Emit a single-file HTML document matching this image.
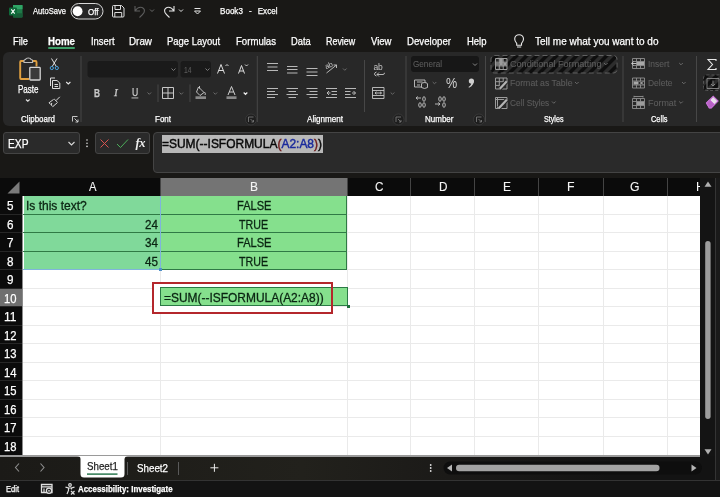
<!DOCTYPE html>
<html lang="en">
<head>
<meta charset="utf-8">
<title>Book3 - Excel</title>
<style>
*{box-sizing:border-box;margin:0;padding:0}
html,body{width:720px;height:497px;overflow:hidden;background:#191816}
body{position:relative;font-family:"Liberation Sans",sans-serif;color:#fff;font-size:11px}
.a{position:absolute;white-space:nowrap;line-height:1}
.t{transform-origin:0 50%;-webkit-text-stroke-width:0.25px}
svg{position:absolute;overflow:visible}
/* title */
#title{left:0;top:0;width:720px;height:27px;background:#191816}
#tabs{left:0;top:27px;width:720px;height:25px;background:#191816}
.tab{font-size:11.5px;color:#fff;top:36px}
/* ribbon */
#ribbon{left:3px;top:52px;width:730px;height:74px;background:#282828;border-radius:6px}
.sep{width:1px;background:#4a4a4a;top:58px;height:56px}
.glabel{font-size:9.5px;color:#fff;top:112px}
.dim{color:#6e6e6e}
/* formula bar */
#fbar{left:0;top:126px;width:720px;height:52px;background:#191816}
#namebox{left:3px;top:132px;width:77px;height:22px;background:#2a2a2a;border-radius:3px;border:1px solid #444}
#fxbox{left:95px;top:132px;width:54.5px;height:22px;background:#2a2a2a;border-radius:3px;border:1px solid #444}
#finput{left:153px;top:132px;width:574px;height:41px;background:#2a2a2a;border-radius:4px;border:1px solid #444}
/* grid */
#grid{left:0;top:178px;width:700px;height:278px;background:#fff}
#colhdr{left:0;top:177.5px;width:700px;height:18.5px;background:#0b0b0b}
#rowhdr{left:0;top:195.5px;width:22.5px;height:260.5px;background:#0b0b0b}
.ch{top:181px;font-size:13px;color:#fff;text-align:center}
.rh{left:0;width:23px;font-size:13px;color:#fff;text-align:center}
.vl{top:196px;width:1px;height:260px;background:#eaeaea}
.hl{left:23px;height:1px;width:677px;background:#eaeaea}
.cell{font-size:13px;color:#0c2a10}
.g{background:#85e08d}
/* bottom */
#sheetbar{left:0;top:456px;width:720px;height:24px;background:linear-gradient(90deg,#1b1a17 0%,#22211c 42%,#1b1a18 62%,#131313 85%)}
#status{left:0;top:480px;width:720px;height:17px;background:#131313}
#vscroll{left:700px;top:177.5px;width:20px;height:279px;background:#141414}
.chd{top:178px;width:1px;height:17.5px;background:#444}
</style>
</head>
<body>
<div class="a" id="title"></div>
<div class="a" id="tabs"></div>
<div class="a" id="ribbon"></div>
<div class="a" id="fbar"></div>
<div class="a" id="grid"></div>
<div class="a" id="colhdr"></div>
<div class="a" id="rowhdr"></div>
<div class="a" id="vscroll"></div>
<div class="a" id="sheetbar"></div>
<div class="a" id="status"></div>
<div class="a g" style="left:23.5px;top:195.6px;width:323.5px;height:74.1px"></div>
<div class="a" style="left:23.5px;top:195.6px;width:136.5px;height:74.1px;background:#80d99a"></div>
<div class="a hl" style="top:213.6px"></div>
<div class="a hl" style="top:232.1px"></div>
<div class="a hl" style="top:250.7px"></div>
<div class="a hl" style="top:269.2px"></div>
<div class="a hl" style="top:287.7px"></div>
<div class="a hl" style="top:306.2px"></div>
<div class="a hl" style="top:324.7px"></div>
<div class="a hl" style="top:343.3px"></div>
<div class="a hl" style="top:361.8px"></div>
<div class="a hl" style="top:380.3px"></div>
<div class="a hl" style="top:398.8px"></div>
<div class="a hl" style="top:417.3px"></div>
<div class="a hl" style="top:435.9px"></div>
<div class="a vl" style="left:159.5px"></div>
<div class="a vl" style="left:346.5px"></div>
<div class="a vl" style="left:410.0px"></div>
<div class="a vl" style="left:474.0px"></div>
<div class="a vl" style="left:538.0px"></div>
<div class="a vl" style="left:602.5px"></div>
<div class="a vl" style="left:666.5px"></div>
<div class="a" style="left:23px;top:213.6px;width:323.5px;height:1px;background:#2f7a45"></div>
<div class="a" style="left:23px;top:232.1px;width:323.5px;height:1px;background:#2f7a45"></div>
<div class="a" style="left:23px;top:250.7px;width:323.5px;height:1px;background:#2f7a45"></div>
<div class="a" style="left:23px;top:269.2px;width:323.5px;height:1px;background:#2f7a45"></div>
<div class="a" style="left:346px;top:195.6px;width:1px;height:74.1px;background:#2f7a45"></div>
<div class="a" style="left:159.7px;top:195.6px;width:1.5px;height:74.1px;background:#7fb4dc"></div>
<div class="a" style="left:23px;top:268.7px;width:137px;height:1.5px;background:#7fb4dc"></div>
<div class="a" style="left:159px;top:267.9px;width:3px;height:3px;background:#4f8fc8"></div>
<div class="a" style="left:152.3px;top:282.2px;width:181.2px;height:31.4px;background:#fff"></div>
<div class="a" style="left:160px;top:287.4px;width:188px;height:19.0px;background:#85e08d;border:1.5px solid #2a7a45"></div>
<div class="a" style="left:346.5px;top:304.7px;width:3.5px;height:3.5px;background:#1e6e3c"></div>
<div class="a" style="left:0;top:288.2px;width:22.5px;height:18.5px;background:#6f6f6f"></div>
<div class="a" style="left:0;top:213.6px;width:22.5px;height:1px;background:#262626"></div>
<div class="a" style="left:0;top:232.1px;width:22.5px;height:1px;background:#262626"></div>
<div class="a" style="left:0;top:250.7px;width:22.5px;height:1px;background:#262626"></div>
<div class="a" style="left:0;top:269.2px;width:22.5px;height:1px;background:#262626"></div>
<div class="a" style="left:0;top:287.7px;width:22.5px;height:1px;background:#262626"></div>
<div class="a" style="left:0;top:306.2px;width:22.5px;height:1px;background:#262626"></div>
<div class="a" style="left:0;top:324.7px;width:22.5px;height:1px;background:#262626"></div>
<div class="a" style="left:0;top:343.3px;width:22.5px;height:1px;background:#262626"></div>
<div class="a" style="left:0;top:361.8px;width:22.5px;height:1px;background:#262626"></div>
<div class="a" style="left:0;top:380.3px;width:22.5px;height:1px;background:#262626"></div>
<div class="a" style="left:0;top:398.8px;width:22.5px;height:1px;background:#262626"></div>
<div class="a" style="left:0;top:417.3px;width:22.5px;height:1px;background:#262626"></div>
<div class="a" style="left:0;top:435.9px;width:22.5px;height:1px;background:#262626"></div>
<div class="a" style="left:152.3px;top:282.2px;width:181.2px;height:31.4px;border:2.6px solid #b4272c"></div>
<!-- column header details -->
<div class="a" style="left:160px;top:177.5px;width:186.7px;height:18px;background:#747474"></div>
<div class="a" style="left:22.3px;top:195.5px;width:1.2px;height:260px;background:#8c8c8c"></div>
<div class="a chd" style="left:159.5px"></div><div class="a chd" style="left:346.5px"></div><div class="a chd" style="left:410px"></div><div class="a chd" style="left:474px"></div><div class="a chd" style="left:538px"></div><div class="a chd" style="left:602.5px"></div><div class="a chd" style="left:666.5px"></div>
<svg style="left:0;top:178px" width="23" height="18"><path d="M19.5 3.5V15.5H7.5Z" fill="#7a7a7a"/></svg>
<div class="a" style="left:696px;top:180.5px;font-size:12.5px;color:#fff;width:4px;overflow:hidden;will-change:transform">H</div>
<div class="a" style="left:0;top:455px;width:700px;height:1.5px;background:#9a9a9a"></div>
<!-- vertical scrollbar -->
<svg style="left:700px;top:178px" width="20" height="278"><path d="M4.500 8.800L8 3.600L11.500 8.800Z" fill="#b0b0b0"/><path d="M4.500 271.200L8 276.400L11.500 271.200Z" fill="#b0b0b0"/><rect x="5.200" y="63" width="5.400" height="178" rx="2.700" fill="#9d9d9d"/><rect x="15.200" y="0" width="0.800" height="302" fill="#3c3c3c"/><rect x="16" y="0" width="4" height="302" fill="#1a1a1a"/></svg>
<!-- sheet bar -->
<svg style="left:0;top:456px" width="720" height="24">
<path d="M19 7.5L15.5 11.5L19 15.5" fill="none" stroke="#8f8f8f" stroke-width="1.1"/>
<path d="M40.5 7.5L44 11.5L40.5 15.5" fill="none" stroke="#8f8f8f" stroke-width="1.1"/>
<path d="M77 0H128V0Q125 0 124.500 3V18Q124.500 21.500 121 21.500H84Q80.500 21.500 80.500 18V3Q80.500 0 77 0Z" fill="#fff"/>
<rect x="87" y="17.400" width="30.500" height="1.400" fill="#1f7044"/>
<rect x="127" y="6" width="1" height="13" fill="#5a5a5a"/>
<rect x="178" y="6" width="1" height="13" fill="#5a5a5a"/>
<path d="M210.400 11.800H218.400M214.400 7.800V15.800" stroke="#ececec" stroke-width="1" fill="none"/>
<circle cx="430.700" cy="9" r="0.900" fill="#ddd"/><circle cx="430.700" cy="12" r="0.900" fill="#ddd"/><circle cx="430.700" cy="15" r="0.900" fill="#ddd"/>
<rect x="443.500" y="5.500" width="258.500" height="13" rx="6.500" fill="#0e0e0e"/>
<rect x="456" y="8.800" width="203.500" height="6.400" rx="3.200" fill="#a3a3a3"/>
<path d="M452 8.500L447 12L452 15.500Z" fill="#b5b5b5"/>
<path d="M691.500 8.500L696.500 12L691.500 15.500Z" fill="#b5b5b5"/>
</svg>
<div class="a" style="left:0;top:480px;width:720px;height:1px;background:#333"></div>
<svg style="left:0;top:480px" width="720" height="17" viewBox="0 480 720 17">
<path d="M41.500 484.500H52V492.500H41.500ZM41.500 486.800H52" fill="none" stroke="#e0e0e0" stroke-width="1.300"/>
<circle cx="49" cy="490.800" r="2.600" fill="#1a1a1a" stroke="#e0e0e0" stroke-width="1.300"/>
<circle cx="49" cy="490.800" r="0.900" fill="#e0e0e0"/>
<path d="M44 488.500V492.500" stroke="#e0e0e0" stroke-width="1.200" fill="none"/>
<circle cx="70" cy="485" r="1.300" fill="none" stroke="#e0e0e0" stroke-width="1.200"/>
<path d="M65.500 487.200L68.500 488V490.500L67 494M74.500 487.200L71.500 488V489.500M68.500 488H71.500M71 491L74.500 494.500M74.500 491L71 494.500" fill="none" stroke="#e0e0e0" stroke-width="1.200"/>
</svg>

<!-- formula bar -->
<div class="a" id="namebox"></div>
<div class="a" id="fxbox"></div>
<div class="a" id="finput"></div>
<div class="a" style="left:162px;top:134.5px;width:160.5px;height:18px;background:#b8b8b8"></div>
<svg style="left:0;top:0" width="720" height="180" viewBox="0 0 720 180">
<!-- title bar icons -->
<g id="xl">
<rect x="13" y="5" width="9.500" height="12.500" rx="1.200" fill="#1e7a48"/>
<rect x="13" y="5" width="9.500" height="4.200" fill="#2fa565"/>
<rect x="13" y="13.300" width="9.500" height="4.200" fill="#175c37"/>
<rect x="9" y="7.500" width="8" height="8" rx="1" fill="#0f6a3a"/>
<path d="M11.300 9.300L14.700 13.700M14.700 9.300L11.300 13.700" stroke="#fff" stroke-width="1.100" fill="none"/>
</g>
<rect x="71" y="3.500" width="32" height="15.500" rx="7.750" fill="#262626" stroke="#d8d8d8" stroke-width="1"/>
<circle cx="77.600" cy="11.250" r="4.900" fill="#fff"/>
<!-- save -->
<path d="M112.500 6.500Q112.500 5.500 113.500 5.500H121.500L124 8V16Q124 17 123 17H113.500Q112.500 17 112.500 16ZM115 5.500V9.500H120.500V5.500M114.800 17V12.500H121.700V17" fill="none" stroke="#dcdcdc" stroke-width="1"/>
<!-- undo (dim) -->
<path d="M135 6V11H140M135 11Q138 6.500 142 7.500Q145.500 9 144 12.500Q143 14.500 139.500 17.500" fill="none" stroke="#5e5e5e" stroke-width="1.100"/>
<path d="M150 9.500L152 11.500L154 9.500" fill="none" stroke="#6a6a6a" stroke-width="1"/>
<!-- redo -->
<path d="M174 6V11H169M174 11Q171 6.500 167 7.500Q163.500 9 165 12.500Q166 14.500 169.500 17.500" fill="none" stroke="#e4e4e4" stroke-width="1.100"/>
<path d="M179 9.500L181 11.500L183 9.500" fill="none" stroke="#e4e4e4" stroke-width="1"/>
<!-- customize -->
<path d="M194.500 8.500H200.500" stroke="#e4e4e4" stroke-width="1" fill="none"/>
<path d="M194.500 11L197.500 14L200.500 11Z" fill="none" stroke="#e4e4e4" stroke-width="1"/>
<!-- home underline -->
<rect x="48" y="47" width="27" height="2" rx="1" fill="#3e9e68"/>
<!-- lightbulb -->
<path d="M516.700 45.300V43.300Q514.700 41.300 514.700 39.100A4.400 4.400 0 0 1 523.500 39.100Q523.500 41.300 521.500 43.300V45.300ZM517 47H521.200" fill="none" stroke="#e8e8e8" stroke-width="1.100"/>

<!-- ribbon separators -->
<g fill="#474747">
<rect x="80.500" y="56" width="1" height="66"/>
<rect x="256.800" y="56" width="1" height="66"/>
<rect x="364" y="60" width="1" height="52"/>
<rect x="405.500" y="56" width="1" height="66"/>
<rect x="485" y="56" width="1" height="66"/>
<rect x="622.500" y="56" width="1" height="66"/>
<rect x="696" y="56" width="1" height="66"/>
<rect x="157.500" y="84.500" width="1" height="17.500"/>
<rect x="189.500" y="84.500" width="1" height="17.500"/>
</g>
<!-- clipboard: paste -->
<path d="M24 61H21Q20.200 61 20.200 62V78Q20.200 79 21 79H29M32.500 61H35.500Q36.500 61 36.500 62V66.500" fill="none" stroke="#e0a040" stroke-width="1.900"/>
<path d="M24 62.500V60.500Q24 59.500 25.500 59.500Q26 58 28.300 58Q30.600 58 31.100 59.500Q32.600 59.500 32.600 60.500V62.500Z" fill="#282828" stroke="#bdbdbd" stroke-width="1.100"/>
<rect x="29.800" y="67.300" width="10.400" height="12.700" rx="0.800" fill="#3a3a3a" stroke="#d4d4d4" stroke-width="1.300"/>
<path d="M26 99.500L27.800 101.300L29.600 99.500" fill="none" stroke="#e4e4e4" stroke-width="1.100"/>
<!-- cut -->
<path d="M51.500 58.500L56.300 66.500M57 58.500L52.200 66.500" stroke="#e0e0e0" stroke-width="1" fill="none"/>
<circle cx="51.800" cy="68" r="1.600" fill="none" stroke="#4aa3e0" stroke-width="1"/>
<circle cx="56.800" cy="68" r="1.600" fill="none" stroke="#4aa3e0" stroke-width="1"/>
<!-- copy -->
<path d="M50.500 86V78H55M52.500 80.500H57L59.800 83V88.500H52.500ZM54.500 84.500H58M54.500 86.500H58" fill="none" stroke="#dcdcdc" stroke-width="1"/>
<path d="M66.200 82L68.300 84L70.400 82" fill="none" stroke="#e4e4e4" stroke-width="1.100"/>
<!-- format painter -->
<path d="M59.800 96.800L56 100.600M54.200 99L57.600 102.400M53.600 99.400L49 102.800L50.500 104.300L51.800 103.200L51.300 105.100L52.800 106.600L57.200 102.800" fill="none" stroke="#d8d8d8" stroke-width="1" stroke-linejoin="round"/>
<!-- launcher clipboard -->
<path d="M72.500 121.500V116.500H77.500M74.500 118.500L78 122M78 119.500V122H75.500" fill="none" stroke="#d8d8d8" stroke-width="0.900"/>

<!-- font group -->
<rect x="87.500" y="61" width="90.500" height="16.500" rx="3" fill="#1a1a1a"/>
<path d="M171.500 68.500L173.500 70.500L175.500 68.500" fill="none" stroke="#7a7a7a" stroke-width="1"/>
<rect x="180.500" y="61" width="30.500" height="16.500" rx="3" fill="#1a1a1a"/>
<path d="M205.500 68.500L207.500 70.500L209.500 68.500" fill="none" stroke="#7a7a7a" stroke-width="1"/>
<!-- A^ Av -->
<path d="M217.500 73.500L221 64.500L224.500 73.500M218.700 70.500H223.300" fill="none" stroke="#dcdcdc" stroke-width="1"/>
<path d="M225.500 66L227 64.500L228.500 66" fill="none" stroke="#dcdcdc" stroke-width="0.900"/>
<path d="M238.500 73.500L241.500 65.500L244.500 73.500M239.500 71H243.500" fill="none" stroke="#dcdcdc" stroke-width="1"/>
<path d="M245 64.500L246.500 66L248 64.500" fill="none" stroke="#dcdcdc" stroke-width="0.900"/>
<rect x="131.500" y="97.500" width="6.800" height="0.900" fill="#c8c8c8"/>
<path d="M147.500 92.500L149.300 94.300L151.100 92.500" fill="none" stroke="#6a6a6a" stroke-width="1"/>
<!-- borders -->
<path d="M162.500 87.500H173.500V98.500H162.500ZM168 87.500V98.500M162.500 93H173.500" fill="none" stroke="#c8c8c8" stroke-width="1"/>
<path d="M179.500 92.500L181.300 94.300L183.100 92.500" fill="none" stroke="#6a6a6a" stroke-width="1"/>
<!-- fill -->
<path d="M198.500 87L204 92.500L200 95.500L196.500 92ZM199.500 86V88.500M204.500 92Q206 94 205 95" fill="none" stroke="#d0d0d0" stroke-width="0.900"/>
<rect x="195.500" y="96.300" width="10.500" height="2.700" fill="#8a8a8a"/>
<path d="M213.500 92.500L215.300 94.300L217.100 92.500" fill="none" stroke="#6a6a6a" stroke-width="1"/>
<!-- font color -->
<path d="M228 95L231.500 86.500L235 95M229.300 92H233.700" fill="none" stroke="#d0d0d0" stroke-width="1"/>
<rect x="226.500" y="96.300" width="10" height="2.700" fill="#8a8a8a"/>
<path d="M243.700 92.500L245.500 94.300L247.300 92.500" fill="none" stroke="#f0f0f0" stroke-width="1.200"/>
<!-- launcher font (dim, circled) -->
<circle cx="251" cy="119.500" r="5.500" fill="#1f1f1f" stroke="#3c3c3c" stroke-width="0.800"/>
<path d="M248.500 122V117H253.500M250.500 119L253.500 122M253.500 120V122H251.500" fill="none" stroke="#777" stroke-width="0.900"/>

<!-- alignment -->
<g fill="none" stroke="#b8b8b8" stroke-width="1">
<path d="M267 63.500H278M267.500 67H277.500M267 70.500H278" />
<path d="M287 66.500H297.500M287 69.500H297.500M287 73H297.500" />
<path d="M306.500 68.500H317.500M306.500 72H317.500M306.500 75.500H317.500" />
<path d="M267 88.500H278M267 91.500H275M267 94.500H278M267 97.500H275"/>
<path d="M286.500 88.500H298M288.500 91.500H296M286.500 94.500H298M288.500 97.500H296"/>
<path d="M306.500 88.500H317.500M309.500 91.500H317.500M306.500 94.500H317.500M309.500 97.500H317.500"/>
<path d="M326 88.500H337M331.500 91.500H337M331.500 94.500H337M326 97.500H337M329 91L327 93L329 95M327 93H330.500"/>
<path d="M345 88.500H356M345 91.500H350.500M345 94.500H350.500M345 97.500H356M353.500 91L355.500 93L353.500 95M352 93H355.500"/>
</g>
<path d="M326.500 73L336.500 65M336.500 65H333.500M336.500 65V68" fill="none" stroke="#c4c4c4" stroke-width="0.900"/>
<path d="M343 68.500L344.800 70.300L346.600 68.500" fill="none" stroke="#6a6a6a" stroke-width="1"/>
<!-- wrap -->
<path d="M377 74.500H383Q384.500 74.500 384.500 72.800M379 72.500L377 74.500L379 76.500M376.500 72Q374.500 72.500 374.500 74Q374.500 75.500 376.500 76" fill="none" stroke="#c4c4c4" stroke-width="0.900"/>
<!-- merge -->
<path d="M372.500 87.500H384V98.500H372.500ZM372.500 90.500H384M372.500 95.500H384M375 93H381.500M376.500 91.800L375 93L376.500 94.200M380 91.800L381.500 93L380 94.200" fill="none" stroke="#c4c4c4" stroke-width="0.900"/>
<path d="M390.700 92.500L392.500 94.300L394.300 92.500" fill="none" stroke="#6a6a6a" stroke-width="1"/>
<circle cx="398.500" cy="119.500" r="5.500" fill="#1f1f1f" stroke="#3c3c3c" stroke-width="0.800"/>
<path d="M396 122V117H401M398 119L401 122M401 120V122H399" fill="none" stroke="#777" stroke-width="0.900"/>

<!-- number -->
<rect x="411" y="56" width="68" height="16" rx="3" fill="#171717"/>
<path d="M473 63.500L475 65.500L477 63.500" fill="none" stroke="#8a8a8a" stroke-width="1"/>
<path d="M414.500 80H425V87H414.500ZM417 82H422.500M417 85H420" fill="none" stroke="#c4c4c4" stroke-width="0.900"/>
<ellipse cx="424.500" cy="84" rx="3" ry="1.500" fill="#2a2a2a" stroke="#c4c4c4" stroke-width="0.900"/>
<path d="M421.500 84V87.500Q424.500 89.500 427.500 87.500V84" fill="#2a2a2a" stroke="#c4c4c4" stroke-width="0.900"/>
<path d="M432.700 82L434.500 83.800L436.300 82" fill="none" stroke="#6a6a6a" stroke-width="1"/>
<circle cx="471.400" cy="81" r="2.600" fill="#d0d0d0"/>
<path d="M473.600 80Q474.800 85 469 87.800L468.500 87Q471.500 85.300 471.200 82.500Z" fill="#d0d0d0"/>
<g fill="none" stroke="#c4c4c4" stroke-width="0.900">
<path d="M416 98H421M416 98L417.800 96.500M416 98L417.800 99.500"/>
<ellipse cx="424" cy="99" rx="1.300" ry="2.300"/><ellipse cx="420" cy="105" rx="1.300" ry="2.300"/><ellipse cx="424" cy="105" rx="1.300" ry="2.300"/>
<path d="M435 104H440M440 104L438.200 102.500M440 104L438.200 105.500"/>
<ellipse cx="440" cy="99" rx="1.300" ry="2.300"/><ellipse cx="444" cy="99" rx="1.300" ry="2.300"/><ellipse cx="444" cy="105" rx="1.300" ry="2.300"/>
</g>
<circle cx="479" cy="119.500" r="5.500" fill="#1f1f1f" stroke="#3c3c3c" stroke-width="0.800"/>
<path d="M476.500 122V117H481.500M478.500 119L481.500 122M481.500 120V122H479.500" fill="none" stroke="#777" stroke-width="0.900"/>

<!-- styles -->
<defs><pattern id="hat" width="7.070" height="7.070" patternUnits="userSpaceOnUse" patternTransform="rotate(-45)"><rect width="7.070" height="7.070" fill="#2d2d2d"/><rect width="7.070" height="3.600" fill="#0e0e0e"/></pattern></defs>
<rect x="491" y="55.500" width="126" height="17.500" rx="3.500" fill="url(#hat)" stroke="#686868" stroke-width="0.900" stroke-dasharray="5 3"/>
<g fill="none" stroke="#9c9c9c" stroke-width="1">
<path d="M495.500 58.500H507V69.500H495.500ZM499.300 58.500V69.500M503.200 58.500V69.500M495.500 62.200H507M495.500 65.900H507"/>
<path d="M495.500 78H507V89H495.500ZM499.300 78V89M503.200 78V82M495.500 81.700H507M495.500 85.400H500"/>
<path d="M495.500 97.500H507V108.500H495.500ZM497.500 97.500V108.500M495.500 99.500H507"/>
</g>
<rect x="499.800" y="59" width="3" height="6.500" fill="#9c9c9c"/><rect x="503.600" y="62.600" width="3" height="3" fill="#9c9c9c"/><rect x="496" y="62.600" width="3" height="3" fill="#777"/>
<path d="M499.800 88.800L506.800 81.300" stroke="#282828" stroke-width="4.200" fill="none"/>
<path d="M499.800 88.800L506.800 81.300" stroke="#b4b4b4" stroke-width="2.200" fill="none"/>
<path d="M498.800 108.300L506.800 99.800" stroke="#282828" stroke-width="4.200" fill="none"/>
<path d="M498.800 108.300L506.800 99.800" stroke="#b4b4b4" stroke-width="2.200" fill="none"/>
<path d="M604 63L605.800 64.800L607.600 63" fill="none" stroke="#6a6a6a" stroke-width="1"/>
<path d="M575 82L576.800 83.800L578.600 82" fill="none" stroke="#6a6a6a" stroke-width="1"/>
<path d="M552 101.500L553.800 103.300L555.600 101.500" fill="none" stroke="#6a6a6a" stroke-width="1"/>

<!-- cells -->
<g fill="none" stroke="#8e8e8e" stroke-width="0.900">
<path d="M632.500 58.500H644.500V68.500H632.500ZM636.500 58.500V68.500M640.500 58.500V68.500M632.500 61.500H644.500M632.500 65.500H644.500"/>
<path d="M632.500 78H644.500V88H632.500ZM636.500 78V81M640.500 78V81M636.500 85V88M640.500 85V88M632.500 81H644.500M632.500 85H644.500"/>
<path d="M632.500 98.500H644.500V108.500H632.500ZM636.500 98.500V108.500M640.500 98.500V108.500M632.500 101.500H644.500M632.500 105.500H644.500M634 96.500H643M634 95.800V97.500M643 95.800V97.500"/>
</g>
<rect x="637" y="62" width="7" height="3" fill="#a8a8a8"/>
<path d="M631.500 63.500H636.500M633.500 61.800L631.700 63.500L633.500 65.200" fill="none" stroke="#d0d0d0" stroke-width="0.900"/>
<rect x="633.500" y="81.500" width="5" height="3" fill="#a8a8a8"/>
<path d="M640 81.500L643 84.500M643 81.500L640 84.500" fill="none" stroke="#c8c8c8" stroke-width="0.900"/>
<rect x="637" y="102" width="7" height="3" fill="#9c9c9c"/>
<path d="M679.200 63L681 64.800L682.800 63" fill="none" stroke="#6a6a6a" stroke-width="1"/>
<path d="M682 82L683.800 83.800L685.600 82" fill="none" stroke="#6a6a6a" stroke-width="1"/>
<path d="M679.200 101.500L681 103.300L682.800 101.500" fill="none" stroke="#6a6a6a" stroke-width="1"/>

<!-- editing -->
<path d="M716 61V59.500H708L712.500 64.500L708 69.500H716V68" fill="none" stroke="#e8e8e8" stroke-width="1.100"/>
<rect x="703.500" y="75" width="20" height="15.500" rx="3" fill="url(#hat)" stroke="#5a5a5a" stroke-width="0.900" stroke-dasharray="3 2"/>
<path d="M707 78.500H719V88.500H707ZM713 80.500V86M711 84L713 86L715 84" fill="none" stroke="#8a8a8a" stroke-width="0.900"/>
<path d="M706.500 103L713.200 96.300L718 101.100L711.300 107.800H709.300Z" fill="#e8e0ea" stroke="#c670d4" stroke-width="1.200"/><path d="M706.500 103L709.700 99.800L714.500 104.600L711.300 107.800H709.300Z" fill="#b862c6" stroke="#c670d4" stroke-width="1"/>

<!-- formula bar icons -->
<path d="M68.500 142L71.500 145L74.500 142" fill="none" stroke="#d8d8d8" stroke-width="1.100"/>
<circle cx="87" cy="140" r="0.800" fill="#ddd"/><circle cx="87" cy="143.200" r="0.800" fill="#ddd"/><circle cx="87" cy="146.400" r="0.800" fill="#ddd"/>
<path d="M100.500 139.500L108.500 147.500M108.500 139.500L100.500 147.500" stroke="#d9534f" stroke-width="1" fill="none"/>
<path d="M117 144L120.500 147.500L128 139.500" stroke="#4cae5a" stroke-width="1" fill="none"/>
</svg>
<div class="a" style="left:0;top:0;width:720px;height:180px;will-change:transform">
<div class="a" style="left:135.500px;top:137px;font-family:'Liberation Serif',serif;font-style:italic;font-weight:bold;font-size:12.500px;color:#eee;letter-spacing:-0.3px">fx</div>
<div class="a" style="left:373.500px;top:63.200px;font-size:8.500px;color:#c4c4c4;letter-spacing:-0.3px">ab</div>
<div class="a" style="left:324.500px;top:62px;font-size:7.500px;color:#c4c4c4;letter-spacing:-0.4px;transform:rotate(-20deg)">ab</div>
</div>

<div class="a" id="txt" style="left:0;top:0;width:720px;height:497px;will-change:transform">
<div class="a t" style="left:33.00px;top:6.34px;font-size:9.5px;color:#fff;transform:scaleX(0.801);">AutoSave</div>
<div class="a t" style="left:88.00px;top:6.54px;font-size:9.5px;color:#fff;transform:scaleX(0.840);">Off</div>
<div class="a t" style="left:219.50px;top:6.34px;font-size:9.5px;color:#fff;word-spacing:4.5px;transform:scaleX(0.850);">Book3 - Excel</div>
<div class="a t" style="left:13.00px;top:35.86px;font-size:10.5px;color:#fff;transform:scaleX(0.886);">File</div>
<div class="a t" style="left:48.00px;top:35.86px;font-size:10.5px;color:#fff;font-weight:bold;transform:scaleX(0.925);">Home</div>
<div class="a t" style="left:90.50px;top:35.86px;font-size:10.5px;color:#fff;transform:scaleX(0.895);">Insert</div>
<div class="a t" style="left:129.00px;top:35.86px;font-size:10.5px;color:#fff;transform:scaleX(0.938);">Draw</div>
<div class="a t" style="left:167.00px;top:35.86px;font-size:10.5px;color:#fff;transform:scaleX(0.899);">Page Layout</div>
<div class="a t" style="left:236.00px;top:35.86px;font-size:10.5px;color:#fff;transform:scaleX(0.914);">Formulas</div>
<div class="a t" style="left:290.75px;top:35.86px;font-size:10.5px;color:#fff;transform:scaleX(0.890);">Data</div>
<div class="a t" style="left:325.75px;top:35.86px;font-size:10.5px;color:#fff;transform:scaleX(0.849);">Review</div>
<div class="a t" style="left:370.50px;top:35.86px;font-size:10.5px;color:#fff;transform:scaleX(0.908);">View</div>
<div class="a t" style="left:406.50px;top:35.86px;font-size:10.5px;color:#fff;transform:scaleX(0.919);">Developer</div>
<div class="a t" style="left:466.50px;top:35.86px;font-size:10.5px;color:#fff;transform:scaleX(0.902);">Help</div>
<div class="a t" style="left:534.50px;top:35.86px;font-size:10.5px;color:#fff;transform:scaleX(0.953);">Tell me what you want to do</div>
<div class="a t" style="left:20.50px;top:114.59px;font-size:9px;color:#fff;transform:scaleX(0.882);">Clipboard</div>
<div class="a t" style="left:155.00px;top:114.59px;font-size:9px;color:#fff;transform:scaleX(0.888);">Font</div>
<div class="a t" style="left:307.00px;top:114.59px;font-size:9px;color:#fff;transform:scaleX(0.899);">Alignment</div>
<div class="a t" style="left:424.50px;top:114.59px;font-size:9px;color:#fff;transform:scaleX(0.890);">Number</div>
<div class="a t" style="left:544.00px;top:114.59px;font-size:9px;color:#fff;transform:scaleX(0.795);">Styles</div>
<div class="a t" style="left:651.00px;top:114.59px;font-size:9px;color:#fff;transform:scaleX(0.824);">Cells</div>
<div class="a t" style="left:17.50px;top:84.60px;font-size:10px;color:#fff;transform:scaleX(0.801);">Paste</div>
<div class="a t" style="left:183.50px;top:64.84px;font-size:9.5px;color:#5c5c5c;-webkit-text-stroke-width:0.1px;transform:scaleX(0.709);">14</div>
<div class="a t" style="left:93.50px;top:87.86px;font-size:10.5px;color:#c8c8c8;font-weight:bold;transform:scaleX(0.790);">B</div>
<div class="a t" style="left:113.75px;top:87.86px;font-size:10.5px;color:#c8c8c8;font-style:italic;font-family:'Liberation Serif',serif;transform:scaleX(1.071);">I</div>
<div class="a t" style="left:131.75px;top:87.36px;font-size:10.5px;color:#c8c8c8;transform:scaleX(0.823);">U</div>
<div class="a t" style="left:413.00px;top:59.34px;font-size:9.5px;color:#5c5c5c;-webkit-text-stroke-width:0.1px;transform:scaleX(0.858);">General</div>
<div class="a t" style="left:445.80px;top:76.14px;font-size:14px;color:#cfcfcf;-webkit-text-stroke-width:0;transform:scaleX(0.899);">%</div>
<div class="a t" style="left:509.50px;top:59.34px;font-size:9.5px;color:#5c5c5c;-webkit-text-stroke-width:0.1px;transform:scaleX(0.957);">Conditional Formatting</div>
<div class="a t" style="left:509.50px;top:78.34px;font-size:9.5px;color:#5c5c5c;-webkit-text-stroke-width:0.1px;transform:scaleX(0.920);">Format as Table</div>
<div class="a t" style="left:509.50px;top:97.84px;font-size:9.5px;color:#5c5c5c;-webkit-text-stroke-width:0.1px;transform:scaleX(0.875);">Cell Styles</div>
<div class="a t" style="left:647.50px;top:59.34px;font-size:9.5px;color:#5c5c5c;-webkit-text-stroke-width:0.1px;transform:scaleX(0.894);">Insert</div>
<div class="a t" style="left:647.50px;top:78.34px;font-size:9.5px;color:#5c5c5c;-webkit-text-stroke-width:0.1px;transform:scaleX(0.892);">Delete</div>
<div class="a t" style="left:647.50px;top:97.84px;font-size:9.5px;color:#5c5c5c;-webkit-text-stroke-width:0.1px;transform:scaleX(0.939);">Format</div>
<div class="a t" style="left:7.50px;top:138.12px;font-size:12px;color:#fff;transform:scaleX(0.854);">EXP</div>
<div class="a t" style="left:88.75px;top:180.88px;font-size:12.5px;color:#f4f4f4;-webkit-text-stroke-width:0.1px;transform:scaleX(0.899);">A</div>
<div class="a t" style="left:249.50px;top:180.88px;font-size:12.5px;color:#f4f4f4;-webkit-text-stroke-width:0.1px;transform:scaleX(0.959);">B</div>
<div class="a t" style="left:374.50px;top:180.88px;font-size:12.5px;color:#f4f4f4;-webkit-text-stroke-width:0.1px;transform:scaleX(0.941);">C</div>
<div class="a t" style="left:438.50px;top:180.88px;font-size:12.5px;color:#f4f4f4;-webkit-text-stroke-width:0.1px;transform:scaleX(0.941);">D</div>
<div class="a t" style="left:502.50px;top:180.88px;font-size:12.5px;color:#f4f4f4;-webkit-text-stroke-width:0.1px;transform:scaleX(0.959);">E</div>
<div class="a t" style="left:567.00px;top:180.88px;font-size:12.5px;color:#f4f4f4;-webkit-text-stroke-width:0.1px;transform:scaleX(0.982);">F</div>
<div class="a t" style="left:630.00px;top:180.88px;font-size:12.5px;color:#f4f4f4;-webkit-text-stroke-width:0.1px;transform:scaleX(0.976);">G</div>
<div class="a t" style="left:25.50px;top:199.13px;font-size:13px;color:#0a2412;-webkit-text-stroke-width:0.3px;transform:scaleX(0.924);">Is this text?</div>
<div class="a t" style="left:86.70px;top:460.67px;font-size:11.5px;color:#222;transform:scaleX(0.845);">Sheet1</div>
<div class="a t" style="left:137.00px;top:463.17px;font-size:11.5px;color:#fff;transform:scaleX(0.850);">Sheet2</div>
<div class="a t" style="left:6.00px;top:484.59px;font-size:9px;color:#fff;transform:scaleX(0.838);">Edit</div>
<div class="a t" style="left:78.00px;top:484.59px;font-size:9px;color:#fff;font-weight:bold;transform:scaleX(0.879);">Accessibility: Investigate</div>
<div class="a t" style="left:6.95px;top:199.09px;font-size:13px;color:#fff;transform:scaleX(0.898);">5</div>
<div class="a t" style="left:6.95px;top:217.61px;font-size:13px;color:#fff;transform:scaleX(0.898);">6</div>
<div class="a t" style="left:6.95px;top:236.13px;font-size:13px;color:#fff;transform:scaleX(0.898);">7</div>
<div class="a t" style="left:6.95px;top:254.65px;font-size:13px;color:#fff;transform:scaleX(0.898);">8</div>
<div class="a t" style="left:6.95px;top:273.17px;font-size:13px;color:#fff;transform:scaleX(0.898);">9</div>
<div class="a t" style="left:3.95px;top:291.69px;font-size:13px;color:#fff;transform:scaleX(0.864);">10</div>
<div class="a t" style="left:3.95px;top:310.21px;font-size:13px;color:#fff;transform:scaleX(0.926);">11</div>
<div class="a t" style="left:3.95px;top:328.73px;font-size:13px;color:#fff;transform:scaleX(0.864);">12</div>
<div class="a t" style="left:3.95px;top:347.25px;font-size:13px;color:#fff;transform:scaleX(0.864);">13</div>
<div class="a t" style="left:3.95px;top:365.77px;font-size:13px;color:#fff;transform:scaleX(0.864);">14</div>
<div class="a t" style="left:3.95px;top:384.29px;font-size:13px;color:#fff;transform:scaleX(0.864);">15</div>
<div class="a t" style="left:3.95px;top:402.81px;font-size:13px;color:#fff;transform:scaleX(0.864);">16</div>
<div class="a t" style="left:3.95px;top:421.33px;font-size:13px;color:#fff;transform:scaleX(0.864);">17</div>
<div class="a t" style="left:3.95px;top:439.85px;font-size:13px;color:#fff;transform:scaleX(0.864);">18</div>
<div class="a t" style="left:145.00px;top:217.61px;font-size:13px;color:#0a2412;-webkit-text-stroke-width:0.3px;transform:scaleX(0.898);">24</div>
<div class="a t" style="left:145.00px;top:236.13px;font-size:13px;color:#0a2412;-webkit-text-stroke-width:0.3px;transform:scaleX(0.898);">34</div>
<div class="a t" style="left:145.00px;top:254.65px;font-size:13px;color:#0a2412;-webkit-text-stroke-width:0.3px;transform:scaleX(0.898);">45</div>
<div class="a t" style="left:237.00px;top:199.09px;font-size:13px;color:#0a2412;-webkit-text-stroke-width:0.3px;transform:scaleX(0.853);">FALSE</div>
<div class="a t" style="left:239.40px;top:217.61px;font-size:13px;color:#0a2412;-webkit-text-stroke-width:0.3px;transform:scaleX(0.819);">TRUE</div>
<div class="a t" style="left:237.00px;top:236.13px;font-size:13px;color:#0a2412;-webkit-text-stroke-width:0.3px;transform:scaleX(0.853);">FALSE</div>
<div class="a t" style="left:239.40px;top:254.65px;font-size:13px;color:#0a2412;-webkit-text-stroke-width:0.3px;transform:scaleX(0.819);">TRUE</div>
<div class="a t" style="left:163.80px;top:291.23px;font-size:13px;color:#0a2412;-webkit-text-stroke-width:0.3px;transform:scaleX(0.919);">=SUM(--ISFORMULA(A2:A8))</div>
<div class="a t" style="left:162.30px;top:137.43px;font-size:13px;color:#080808;-webkit-text-stroke-width:0.45px;transform:scaleX(0.921);">=SUM(--ISFORMULA<span style='color:#6e1a1a'>(</span><span style='color:#1a2a9c'>A2:A8</span><span style='color:#6e1a1a'>)</span>)</div>
</div>
</body>
</html>
